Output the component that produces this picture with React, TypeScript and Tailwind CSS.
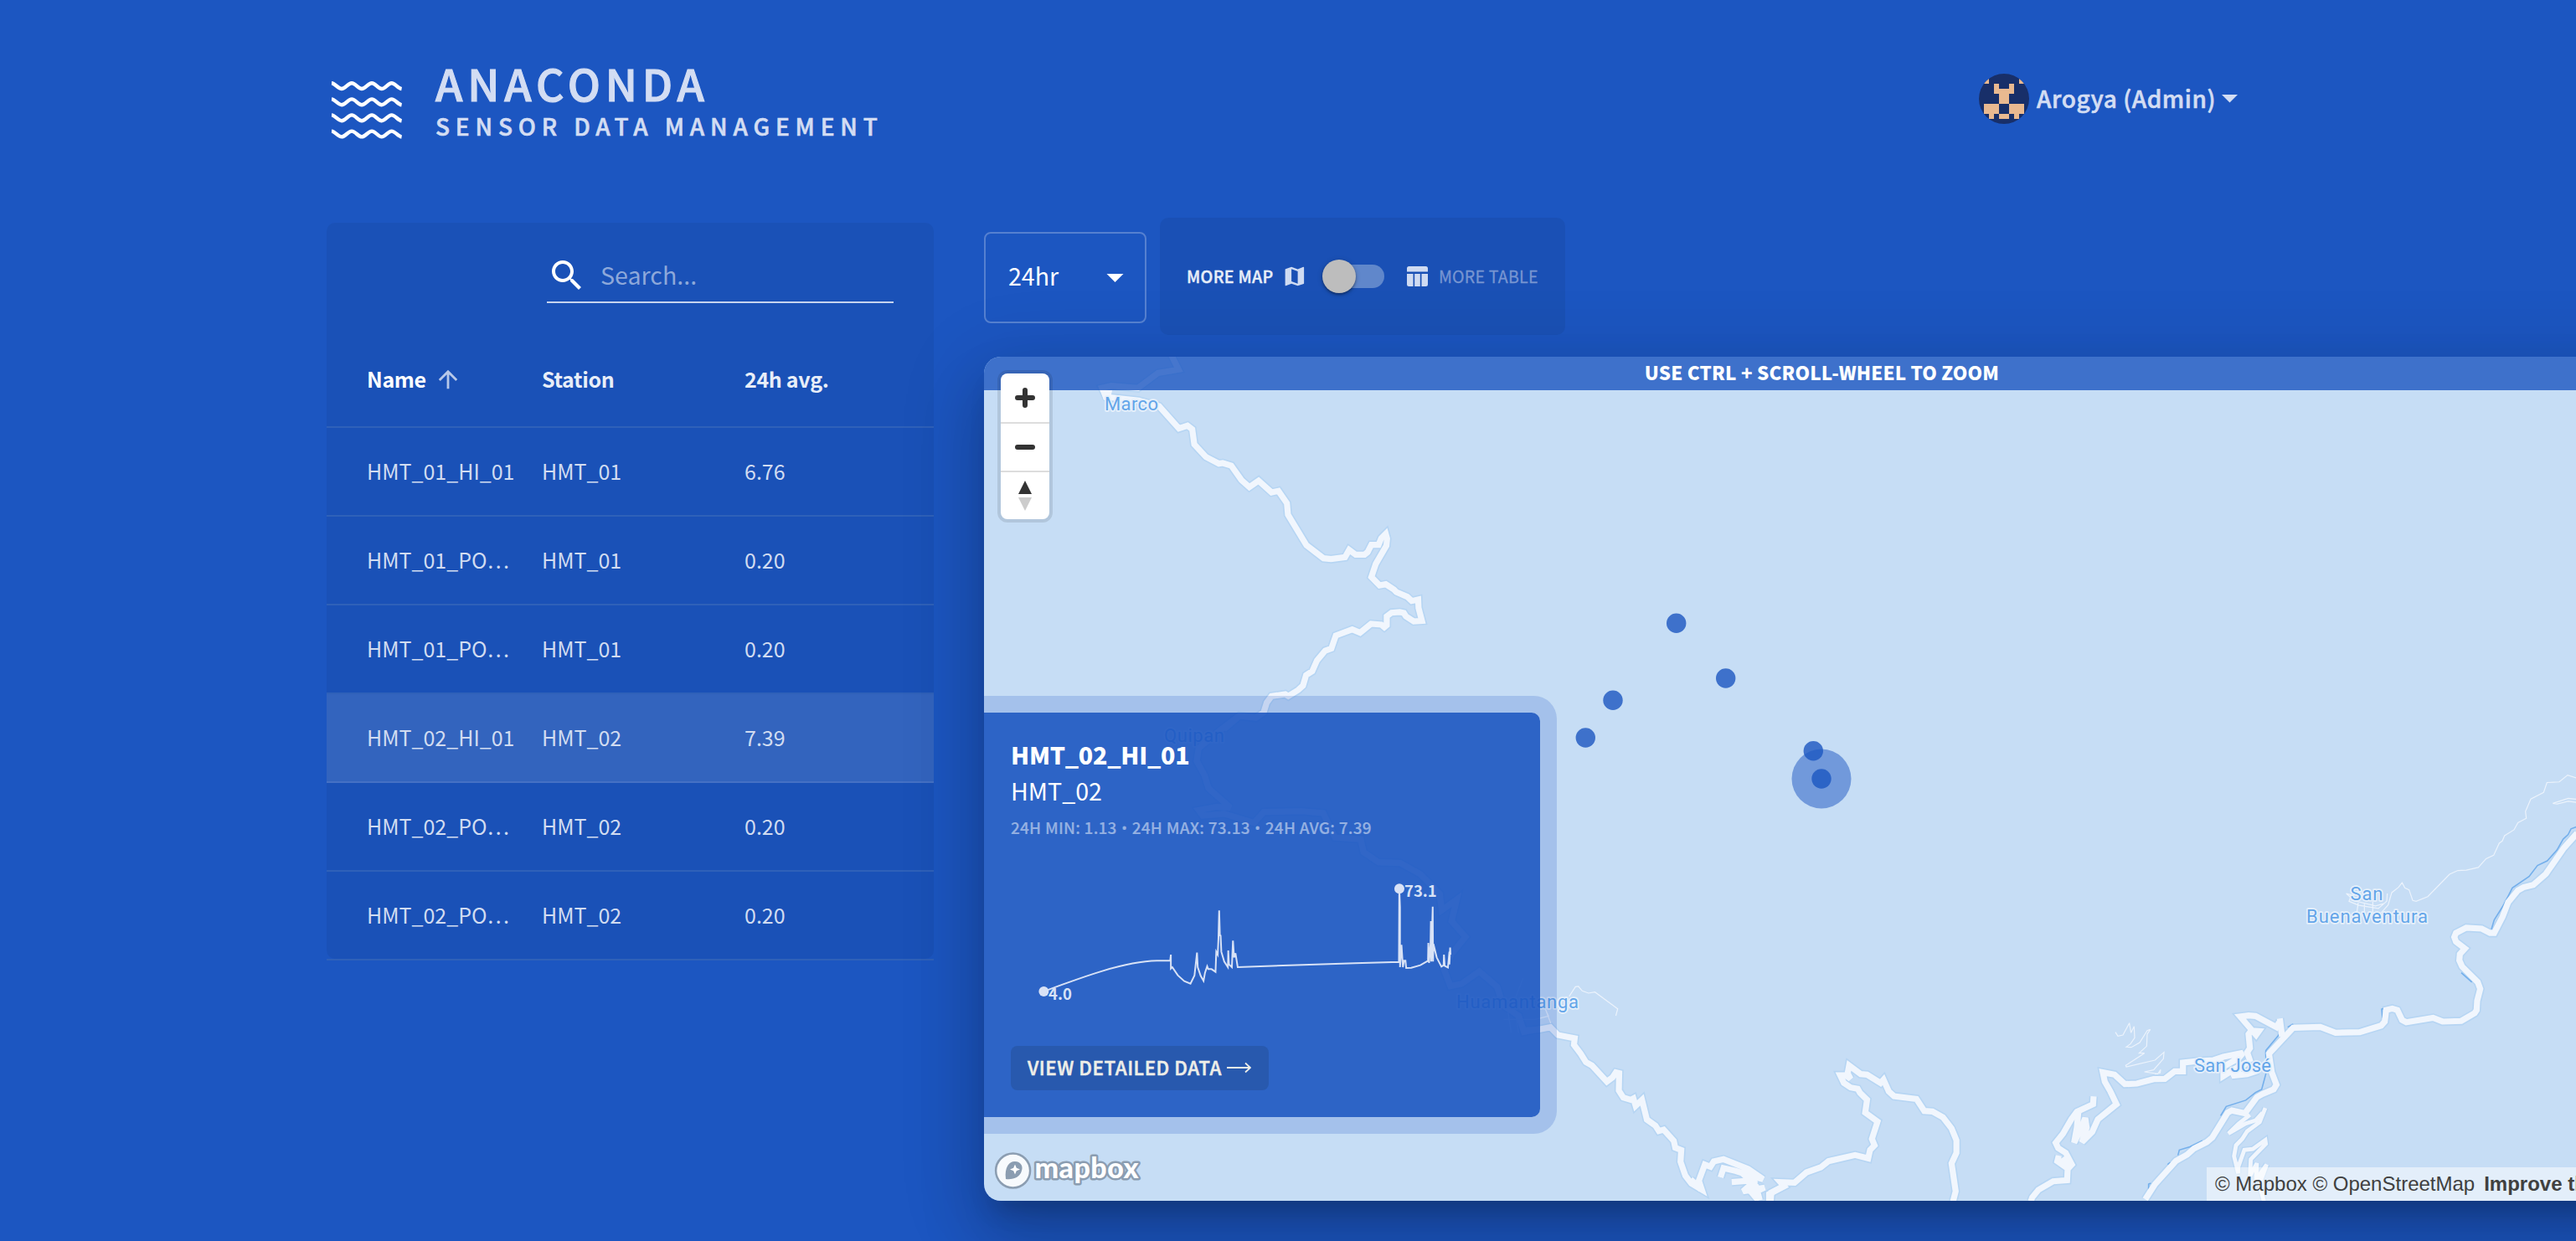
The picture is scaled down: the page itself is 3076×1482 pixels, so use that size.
import React from "react";

const ROADS: { t: string; d: string; minor?: boolean }[] = [
  {
    t: "translate(1180 400) scale(0.40816 0.33333)",
    d: "M535,70 L557,124 L497,136 L438,190 L360,182 L333,190 L345,222 L440,235 L500,255 L558,335 L583,325 L597,338 L603,392 L637,437 L675,461 L686,459 L711,468 L741,520 L764,545 L791,522 L829,564 L849,559 L874,603 L877,644 L931,753 L981,800 L1003,803 L1044,796 L1056,770 L1075,787 L1101,787 L1110,778 L1121,752 L1142,752 L1150,728 L1163,712 L1167,730 L1165,755 L1134,820 L1121,867 L1145,897 L1163,893 L1187,912 L1194,921 L1226,938 L1239,953 L1258,948 L1259,978 L1269,1024 L1245,1026 L1222,1008 L1216,996 L1204,993 L1180,995 L1166,1008 L1166,1040 L1159,1047 L1150,1038 L1120,1035 L1088,1067 L1065,1055 L1017,1077 L1004,1123 L986,1131 L962,1166 L948,1205 L930,1219 L921,1256 L907,1272 L878,1294 L869,1287 L829,1294 L815,1317 L806,1352 L783,1372 L735,1365 L690,1412",
  },
  {
    t: "translate(1160 800) scale(0.47192 0.43497)",
    d: "M675,128 L630,165 L575,215 L570,250 L590,290 L600,325 L655,378 L620,376 L575,385 L585,400 L640,395 L715,420 L740,390 L835,388 L890,393 L920,460 L985,465 L992,500 L1030,528 L1085,530 L1135,560 L1185,615 L1190,660 L1228,630 L1215,690 L1250,733 L1215,780 L1195,820 L1212,868 L1240,862 L1285,828 L1330,870 L1345,920 L1385,950 L1398,994 L1440,985",
  },
  {
    t: "translate(1800 1100) scale(0.44643 0.33333)",
    d: "M40,392 L85,388 L115,380 L135,408 L180,420 L178,443 L196,475 L210,505 L226,517 L266,575 L281,560 L290,542 L299,545 L298,607 L310,632 L330,640 L337,635 L343,662 L360,640 L364,662 L373,711 L396,733 L405,752 L418,747 L445,787 L449,812 L465,820 L463,862 L476,912 L492,940 L520,962 L512,930 L528,872 L543,880 L552,861 L578,853 L644,888 L684,925 L650,912 L610,895 L578,885 L570,918",
  },
  { t: "translate(1800 1100) scale(0.44643 0.33333)", d: "M490,925 L518,962 M600,935 L665,928 L630,968 L688,955 L655,975 L672,1002 M630,905 L665,950 L675,1000" },
  {
    t: "translate(1800 1100) scale(0.44643 0.33333)",
    d: "M700,1004 L700,978 L740,950 L730,935 L768,937 L800,900 L838,882 L859,860 L930,838 L965,850 L970,820 L982,803 L975,780 L990,718 L957,686 L962,640 L943,615 L937,601 L918,596 L900,580 L890,552 L905,552 L918,565 L910,545 L914,517 L945,548 L962,550 L998,580 L1006,568 L1020,610 L1034,627 L1094,637 L1115,680 L1137,682 L1165,703 L1188,743 L1201,785 L1201,830 L1188,868 L1199,968 L1192,1004",
  },
  { t: "translate(1800 1100) scale(0.44643 0.33333)", d: "M704,1004 L706,972 L745,945" },
  {
    t: "translate(2410 1200) scale(0.33333)",
    d: "M45,704 L50,690 L72,663 L125,632 L175,628 L177,588 L192,572 L170,530 L143,513 L134,494 L160,462 L190,410 L210,383 L268,356 L270,328 M145,540 L140,560 L180,588 L160,548 L185,575",
  },
  {
    t: "translate(2410 1200) scale(0.33333)",
    d: "M215,385 L210,440 L200,494 L222,450 L240,405 L245,440 L228,492 L265,455 L285,410 L352,356 L330,310 L310,275 L303,242 L345,250 L382,284 L425,282 L485,266 L525,265 L560,238 L590,238 L590,207 L635,202 L700,198 L735,186 L805,172 L790,190 L735,222 L735,255 L775,230 L820,205 L765,254 L820,248 L860,235",
  },
  {
    t: "translate(2410 1200) scale(0.33333)",
    d: "M832,205 L820,170 L830,155 L825,105 L835,92 L862,94 L852,108 L795,42 L825,38 L850,40 L925,80 L935,62",
  },
  {
    t: "translate(2560 900) scale(0.33333 0.37120)",
    d: "M487,852 L495,910",
  },
  {
    t: "translate(2560 900) scale(0.33333 0.37120)",
    d: "M5,1434 L40,1385 L115,1310 L155,1290 L180,1270 L225,1250 L245,1235 L300,1155 L315,1148 L362,1157 L405,1105 L425,1095 L465,1080 L475,1065 L458,1025 L448,965 L535,882 L632,879 L687,898 L773,896 L850,875 L863,862 L868,825 L890,820 L908,825 L925,857 L940,864 L1036,850 L1070,862 L1137,860 L1185,835 L1192,825 L1194,795 L1205,757 L1196,735 L1140,685 L1130,665 L1132,645 L1150,627 L1118,605 L1112,590 L1118,577 L1155,560 L1210,563 L1240,577 L1255,577 L1285,525 L1305,478 L1340,440 L1360,430 L1395,422 L1440,387 L1505,303 L1552,256",
  },
  {
    t: "translate(2560 900) scale(0.33333 0.37120)",
    minor: true,
    d: "M435,1140 L415,1185 L370,1215 L352,1240 L330,1260 L323,1295 L338,1350 L338,1330 L360,1275 L390,1272 L435,1243 L437,1255 L383,1305 L380,1358 L405,1318 L402,1370 L440,1322 L420,1370 L418,1400 L430,1440 M380,1162 L340,1190 L303,1222 L365,1190 L400,1180 L425,1155",
  },
];

const RIVERS =
  "M1552,235 L1530,242 L1520,260 L1502,275 L1480,310 L1445,345 L1410,360 L1380,395 L1320,432 L1290,485 L1255,535 L1245,565 M485,903 L460,930 L437,955 L437,1030 L422,1080 L400,1090 L365,1115 L295,1135 L275,1165 M535,870 L515,880 M860,820 L852,822 L855,850 M1137,705 L1175,735 M210,1245 L165,1265 L127,1275 L122,1292 M95,1315 L85,1322 M25,1382 L17,1385 L17,1400";

const PIXELS: [number, number, number, number][] = [
  [1, 1, 1, 1], [8, 1, 1, 1], [3, 2, 1, 1], [6, 2, 1, 1], [3, 3, 4, 1], [4, 4, 2, 2],
  [1, 6, 3, 2], [6, 6, 3, 2], [2, 8, 1, 1], [4, 8, 2, 1], [7, 8, 1, 1],
];

const ROWS = [
  ["HMT_01_HI_01", "HMT_01", "6.76"],
  ["HMT_01_PO…", "HMT_01", "0.20"],
  ["HMT_01_PO…", "HMT_01", "0.20"],
  ["HMT_02_HI_01", "HMT_02", "7.39"],
  ["HMT_02_PO…", "HMT_02", "0.20"],
  ["HMT_02_PO…", "HMT_02", "0.20"],
];

const MARKERS = [[2001.7, 744.3], [2060.7, 810], [1926, 836.3], [1893.3, 881], [2165.3, 896.7], [2175, 930]];

const PLACES: { x: number; y: number; w: number; s: string }[] = [
  { x: 1319, y: 490, w: 64, s: "Marco" },
  { x: 1390, y: 886, w: 72, s: "Quipan" },
  { x: 1739, y: 1204, w: 146, s: "Huamantanga" },
  { x: 2806.5, y: 1075, w: 39, s: "San" },
  { x: 2754, y: 1102, w: 145, s: "Buenaventura" },
  { x: 2620, y: 1280, w: 92, s: "San José" },
];

function Header() {
  return (
    <header className="flex h-[260px] items-start justify-between pl-[390px] pr-[404px]">
      <div className="flex pt-[70px]">
        <svg className="mt-[24px] ml-[4px]" width="88" height="76" viewBox="394 94 88 76" fill="none" stroke="#fff" strokeWidth="4.4">
          {[102.6, 121.8, 140.8, 160].map((y) => (
            <path
              key={y}
              transform={`translate(396 ${y})`}
              d="M0,-3.4 C4,-3.2 7.6,3.4 12,3.4 S19.6,-3.4 24,-3.4 S31.6,3.4 36,3.4 S43.6,-3.4 48,-3.4 S55.4,3.4 59.8,3.4 S67.4,-3.4 71.6,-3.4 S79,2.8 83.6,3.6"
            />
          ))}
        </svg>
        <div className="ml-[38px] flex flex-col text-[#d3ddf3]">
          <div className="h-[58px] text-[52px] leading-[58px] font-medium tracking-[5.900px] [-webkit-text-stroke:1.100px]">ANACONDA</div>
          <div className="h-[40px] text-[28px] leading-[44px] font-medium tracking-[6.850px] [-webkit-text-stroke:0.600px]">SENSOR DATA MANAGEMENT</div>
        </div>
      </div>
      <div className="flex items-center pt-[87px]">
        <svg width="60" height="60" viewBox="0 0 10 10">
          <clipPath id="avatar"><circle cx="5" cy="5" r="5" /></clipPath>
          <g clipPath="url(#avatar)">
            <rect width="10" height="10" fill="#182f69" />
            {PIXELS.map(([x, y, w, h], i) => (
              <rect key={i} x={x} y={y} width={w} height={h} fill="#e9b990" />
            ))}
          </g>
        </svg>
        <span className="ml-[9px] w-[212px] whitespace-nowrap pb-[2px] text-[28px] leading-[60px] font-medium tracking-[0.550px] text-[#d3ddf3] [-webkit-text-stroke:0.600px]">Arogya (Admin)</span>
        <svg className="ml-[9px]" width="19" height="10" viewBox="0 0 19 10"><path d="M0 0H19L9.500 9.500Z" fill="#d3ddf3" /></svg>
      </div>
    </header>
  );
}

function SensorTable() {
  return (
    <section className="mt-[6px] h-[881px] w-[725px] shrink-0">
      <div className="h-[879px] rounded-[10px] bg-black/5">
        <div className="flex h-[137px] justify-end pr-[48px]">
          <div className="mt-[32px] flex h-[64px] w-[414px] items-center border-b-2 border-[#c6d4ee]">
            <svg width="48" height="48" viewBox="0 0 24 24" fill="#fff">
              <path d="M15.500 14h-.79l-.28-.27C15.410 12.590 16 11.110 16 9.500 16 5.910 13.090 3 9.500 3S3 5.910 3 9.500 5.910 16 9.500 16c1.610 0 3.090-.59 4.230-1.570l.27.28v.79l5 4.990L20.490 19l-4.990-5zm-6 0C7.010 14 5 11.990 5 9.500S7.010 5 9.500 5 14 7.010 14 9.500 11.990 14 9.500 14z" />
            </svg>
            <span className="ml-[16px] pb-[3px] text-[28.600px] leading-[60px] text-[#8da8da]">Search...</span>
          </div>
        </div>
        <div className="flex h-[108px] items-center border-b-2 border-[#2f61b9] pb-[6px] pl-[48px] text-[25px] font-bold tracking-[-0.350px]">
          <div className="flex w-[209px] items-center text-white">
            Name
            <svg className="ml-[12px]" width="28" height="28" viewBox="2 2 20 20" fill="#b7c8e9">
              <path d="M4 12l1.410 1.410L11 7.830V20h2V7.830l5.580 5.590L20 12l-8-8-8 8z" />
            </svg>
          </div>
          <div className="w-[242px] text-[#e8eef8]">Station</div>
          <div className="text-[#e8eef8]">24h avg.</div>
        </div>
        {ROWS.map((r, i) => (
          <div
            key={i}
            className={
              "flex h-[106px] items-center border-b-2 pl-[48px] text-[25px] text-[#d1dcf1] " +
              (i === 3 ? "border-[#4571c4] bg-white/11" : "border-[#2f61b9]")
            }
          >
            <div className="w-[209px]">{r[0]}</div>
            <div className="w-[242px]">{r[1]}</div>
            <div>{r[2]}</div>
          </div>
        ))}
      </div>
    </section>
  );
}

function Controls() {
  return (
    <div className="flex h-[140px] items-center gap-[16px]">
      <div className="mt-[3px] flex h-[109px] w-[194px] items-center justify-between rounded-[8px] border-2 border-white/25 pr-[25px] pl-[27px] text-[28.600px] text-white">
        <span className="pb-[5px]">24hr</span>
        <svg width="21" height="10" viewBox="0 0 20 10"><path d="M0 0H20L10 10Z" fill="#fff" /></svg>
      </div>
      <div className="flex h-[140px] w-[484px] items-center rounded-[10px] bg-black/6 pl-[32px] text-[19.600px]">
        <span className="w-[104px] whitespace-nowrap font-medium tracking-[0.300px] text-[#e8eef8] [-webkit-text-stroke:0.400px]">MORE MAP</span>
        <svg className="ml-[8px]" width="30" height="30" viewBox="0 0 24 24" fill="#cfdbf2">
          <path d="M20.500 3l-.16.03L15 5.100 9 3 3.360 4.900c-.21.07-.36.25-.36.48V20.500c0 .28.22.5.5.5l.16-.03L9 18.900l6 2.100 5.640-1.900c.21-.07.36-.25.36-.48V3.500c0-.28-.22-.5-.5-.5zM15 19l-6-2.110V5l6 2.110V19z" transform="translate(1.500 0)" />
        </svg>
        <div className="ml-[26px] flex h-[28px] w-[68px] items-center rounded-full bg-[#6087cb]">
          <div className="-ml-[6px] size-[40px] shrink-0 rounded-full bg-[#bdbdbd] shadow-[0_2px_3px_rgba(0,0,0,0.3),0_1px_6px_rgba(0,0,0,0.2)]" />
        </div>
        <svg className="ml-[27px]" width="25" height="24" viewBox="0 0 25 24" fill="#cfdbf2">
          <path d="M2.500 0H22.500A2.500 2.500 0 0 1 25 2.500V6.500H0V2.500A2.500 2.500 0 0 1 2.500 0ZM0 9H7.500V24H2.500A2.500 2.500 0 0 1 0 21.500ZM9.200 9H15.800V24H9.200ZM17.500 9H25V21.500A2.500 2.500 0 0 1 22.500 24H17.500Z" />
        </svg>
        <span className="ml-[13px] whitespace-nowrap tracking-[0.200px] text-[#7795d1] [-webkit-text-stroke:0.300px]">MORE TABLE</span>
      </div>
    </div>
  );
}

function MapCanvas() {
  return (
    <svg className="absolute top-0 left-0" width="1901" height="1008" viewBox="1175 426 1901 1008" fill="none" strokeMiterlimit="3">
      <g stroke="#b6d5f3">
        {ROADS.map((r, i) => (
          <path key={i} transform={r.t} d={r.d} vectorEffect="non-scaling-stroke" strokeWidth={r.minor ? 7.5 : 10.4} />
        ))}
      </g>
      <path d={RIVERS} transform="translate(2560 900) scale(0.33333 0.37120)" vectorEffect="non-scaling-stroke" stroke="#74afeb" strokeWidth="1.600" />
      <g stroke="#f1f6fd">
        {ROADS.map((r, i) => (
          <path key={i} transform={r.t} d={r.d} vectorEffect="non-scaling-stroke" strokeWidth={r.minor ? 4.8 : 7.2} />
        ))}
      </g>
      <g stroke="#ecf3fc" strokeWidth="1.200">
        <path
          transform="translate(2560 900) scale(0.33333 0.37120)"
          vectorEffect="non-scaling-stroke"
          d="M850,512 L875,487 L888,447 L912,430 L925,415 L935,432 L950,438 L963,472 L975,475 L1017,460 L1095,388 L1125,376 L1155,375 L1198,366 L1226,338 L1253,327 L1273,288 L1284,281 L1292,264 L1326,245 L1340,222 L1370,208 L1367,186 L1386,146 L1432,125 L1444,93 L1488,91 L1518,69 L1552,79 M1552,147 L1520,144 L1465,160 L1480,162 L1520,153 L1552,157 M745,455 L725,450 L740,462 L735,475 L770,488 L840,498 L870,475 L872,450 M740,470 L830,490 L862,482 M768,480 L763,510 M790,480 V512 M820,475 V515"
        />
        <path
          transform="translate(2410 1200) scale(0.33333)"
          vectorEffect="non-scaling-stroke"
          d="M348,98 L357,112 L375,108 L398,65 L404,100 L415,77 L417,118 L402,140 L387,151 L405,152 L435,135 L462,92 L473,88 L462,105 L460,148 L433,173 L452,173 L385,217 L387,222 L490,198 L522,170 L520,193 L485,233 L452,240 L500,247 L510,232 L508,244 L490,248"
        />
        <path
          transform="translate(1800 1100) scale(0.44643 0.33333)"
          vectorEffect="non-scaling-stroke"
          d="M165,270 L182,235 L190,234 L200,250 L217,258 L234,254 L295,314 L290,339 M-10,352 L75,352 L110,340 L100,310 L116,366 M0,310 L10,400 M20,320 L30,400 M20,280 L42,205"
        />
      </g>
      <path d="M1314,466 L1328,466 L1326,476 L1318,478Z" fill="#f1f6fd" />
      <g fontFamily="Roboto, 'Liberation Sans', sans-serif" fontSize="22" fill="#63a5e9" stroke="#e6f0fb" strokeWidth="3.500" strokeLinejoin="round" paintOrder="stroke">
        {PLACES.map((p) => (
          <text key={p.s} x={p.x} y={p.y} textLength={p.w}>{p.s}</text>
        ))}
      </g>
      <circle cx="2175" cy="930" r="35.500" fill="#1c56c1" fillOpacity="0.5" />
      {MARKERS.map(([x, y]) => (
        <circle key={x} cx={x} cy={y} r="11.700" fill="#1c56c1" fillOpacity="0.8" />
      ))}
    </svg>
  );
}

function SensorCard() {
  return (
    <div className="absolute top-[425px] left-0 flex h-[483px] w-[664px] flex-col rounded-r-[10px] bg-[#1c56c1]/90 pl-[32px] text-white shadow-[0_0_0_20px_rgba(28,86,193,0.2)]">
      <div className="mt-[32px] h-[40px] text-[28.600px] leading-[36px] font-black tracking-[-0.250px]">HMT_02_HI_01</div>
      <div className="h-[42px] text-[28.600px] leading-[42px]">HMT_02</div>
      <div className="mt-[6px] h-[36px] text-[19px] leading-[34px] font-medium tracking-[0.230px] whitespace-nowrap text-[#95b1e2] [-webkit-text-stroke:0.200px]">
        24H MIN: 1.13 <span className="inline-block w-[9px] text-center font-['Open_Sans',sans-serif]">•</span> 24H MAX: 73.13{" "}
        <span className="inline-block w-[9px] text-center font-['Open_Sans',sans-serif]">•</span> 24H AVG: 7.39
      </div>
      <svg className="-ml-[27px]" width="600" height="242" viewBox="1180 1007 600 242" fill="none">
        <path
          transform="translate(1180 1040) scale(0.43365 0.33333)"
          vectorEffect="non-scaling-stroke"
          stroke="#d8e2f6"
          strokeWidth="2"
          d="M153,432 C250,385 370,325 465,322 L501,322 L503,300 L503,350 L507,345 L522,374 L540,395 L557,404 L568,375 L575,293 L577,345 L585,376 L593,394 L597,365 L603,342 L606,352 L615,352 L626,362 L628,290 L632,300 L634,243 L636,142 L638,230 L640,232 L642,290 L650,325 L660,345 L661,285 L663,335 L671,345 L674,250 L677,310 L681,295 L687,345 L830,338 L1010,331 L1131,326 L1132,63 L1134,130 L1134,345 L1138,265 L1142,345 L1145,322 L1149,322 L1151,348 L1165,347 L1190,338 L1211,322 L1212,258 L1214,330 L1218,260 L1219,180 L1220,325 L1224,128 L1225,325 L1226,262 L1235,310 L1248,343 L1254,338 L1255,300 L1257,340 L1266,346 L1270,290 L1270,335 L1272,275 L1273,300"
        />
        <circle cx="1246.400" cy="1184" r="6" fill="#d8e2f6" />
        <circle cx="1671" cy="1061.300" r="6" fill="#d8e2f6" />
        <g fontFamily="'Noto Sans CJK SC', sans-serif" fontSize="18.500" fontWeight="700" fill="#d8e2f6">
          <text x="1252" y="1194">4.0</text>
          <text x="1677" y="1071">73.1</text>
        </g>
      </svg>
      <div className="flex h-[53px] w-[308px] items-center rounded-[8px] bg-[#2859ae] pb-[2px] pl-[20px] text-[22.400px] font-medium tracking-[0.530px] whitespace-nowrap text-[#eeeee8] [-webkit-text-stroke:0.500px]">
        VIEW DETAILED DATA
        <svg className="ml-[6px]" width="29" height="14" viewBox="0 0 29 14" fill="none" stroke="#eeeee8" strokeWidth="1.800">
          <path d="M0 7H28M22 1.500L28 7L22 12.500" />
        </svg>
      </div>
    </div>
  );
}

function MapControls() {
  return (
    <div className="absolute top-[20px] left-[20px] flex h-[174px] w-[58px] flex-col divide-y-2 divide-[#ddd] overflow-visible rounded-[8px] bg-white shadow-[0_0_0_4px_rgba(0,0,0,0.1)]">
      <div className="flex h-[60px] items-center justify-center">
        <svg width="24" height="24" viewBox="0 0 24 24" stroke="#333" strokeWidth="6" strokeLinecap="round"><path d="M3 12H21M12 3V21" /></svg>
      </div>
      <div className="flex h-[58px] items-center justify-center">
        <svg width="24" height="24" viewBox="0 0 24 24" stroke="#333" strokeWidth="6" strokeLinecap="round"><path d="M3 12H21" /></svg>
      </div>
      <div className="flex h-[56px] items-center justify-center">
        <svg width="16" height="36" viewBox="0 0 16 36"><path d="M0 16L8 0L16 16Z" fill="#333" /><path d="M0 20H16L8 36Z" fill="#ccc" /></svg>
      </div>
    </div>
  );
}

function MapPanel() {
  return (
    <div className="mt-[26px] h-[1008px] w-[2001px] rounded-[20px] shadow-[0_22px_30px_-14px_rgba(0,0,0,0.2),0_48px_76px_6px_rgba(0,0,0,0.14),0_18px_92px_16px_rgba(0,0,0,0.12)]">
      <div className="relative h-full w-full overflow-hidden rounded-[20px] bg-[#c6ddf5]">
        <MapCanvas />
        <div className="absolute top-0 left-0 flex h-[40px] w-full items-center justify-center bg-[#1c56c1]/80 pb-[2px] text-[22.400px] font-black tracking-[0.150px] text-white">
          USE CTRL + SCROLL-WHEEL TO ZOOM
        </div>
        <MapControls />
        <SensorCard />
        <svg className="absolute bottom-[12px] left-[12px]" width="200" height="48" viewBox="1187 1375 200 48">
          <circle cx="1209.600" cy="1399" r="20.500" fill="#f7fafd" stroke="#8b9db1" strokeWidth="2.500" />
          <path d="M1201 1409 C1199 1394 1206 1387.500 1212 1388 C1219 1388 1222 1394 1220 1399 C1218 1407 1210 1410 1201 1409Z" fill="#8b9db1" />
          <path d="M1212 1391.500L1213.800 1395.800L1218 1397.500L1213.800 1399.300L1212 1403.500L1210.200 1399.300L1206 1397.500L1210.200 1395.800Z" fill="#fff" />
          <text x="1235.500" y="1408" textLength="124" fontFamily="Lato, sans-serif" fontWeight="900" fontSize="34" fill="#fff" stroke="#8b9db1" strokeWidth="5" strokeLinejoin="round" paintOrder="stroke">mapbox</text>
        </svg>
        <div className="absolute right-0 bottom-0 flex h-[40px] w-[541px] items-center gap-[11px] bg-white/50 pl-[10px] text-[24px] whitespace-nowrap text-[#404040] font-['Liberation_Sans',Arial,sans-serif]">
          <span>© Mapbox © OpenStreetMap</span>
          <span className="font-bold">Improve this map</span>
        </div>
      </div>
    </div>
  );
}

export default function App() {
  return (
    <div className="h-[1482px] w-[3076px] overflow-hidden bg-[#1c56c1] font-['Noto_Sans_CJK_SC',sans-serif]">
      <Header />
      <main className="flex gap-[60px] pl-[390px]">
        <SensorTable />
        <div className="w-[2001px] shrink-0">
          <Controls />
          <MapPanel />
        </div>
      </main>
    </div>
  );
}
